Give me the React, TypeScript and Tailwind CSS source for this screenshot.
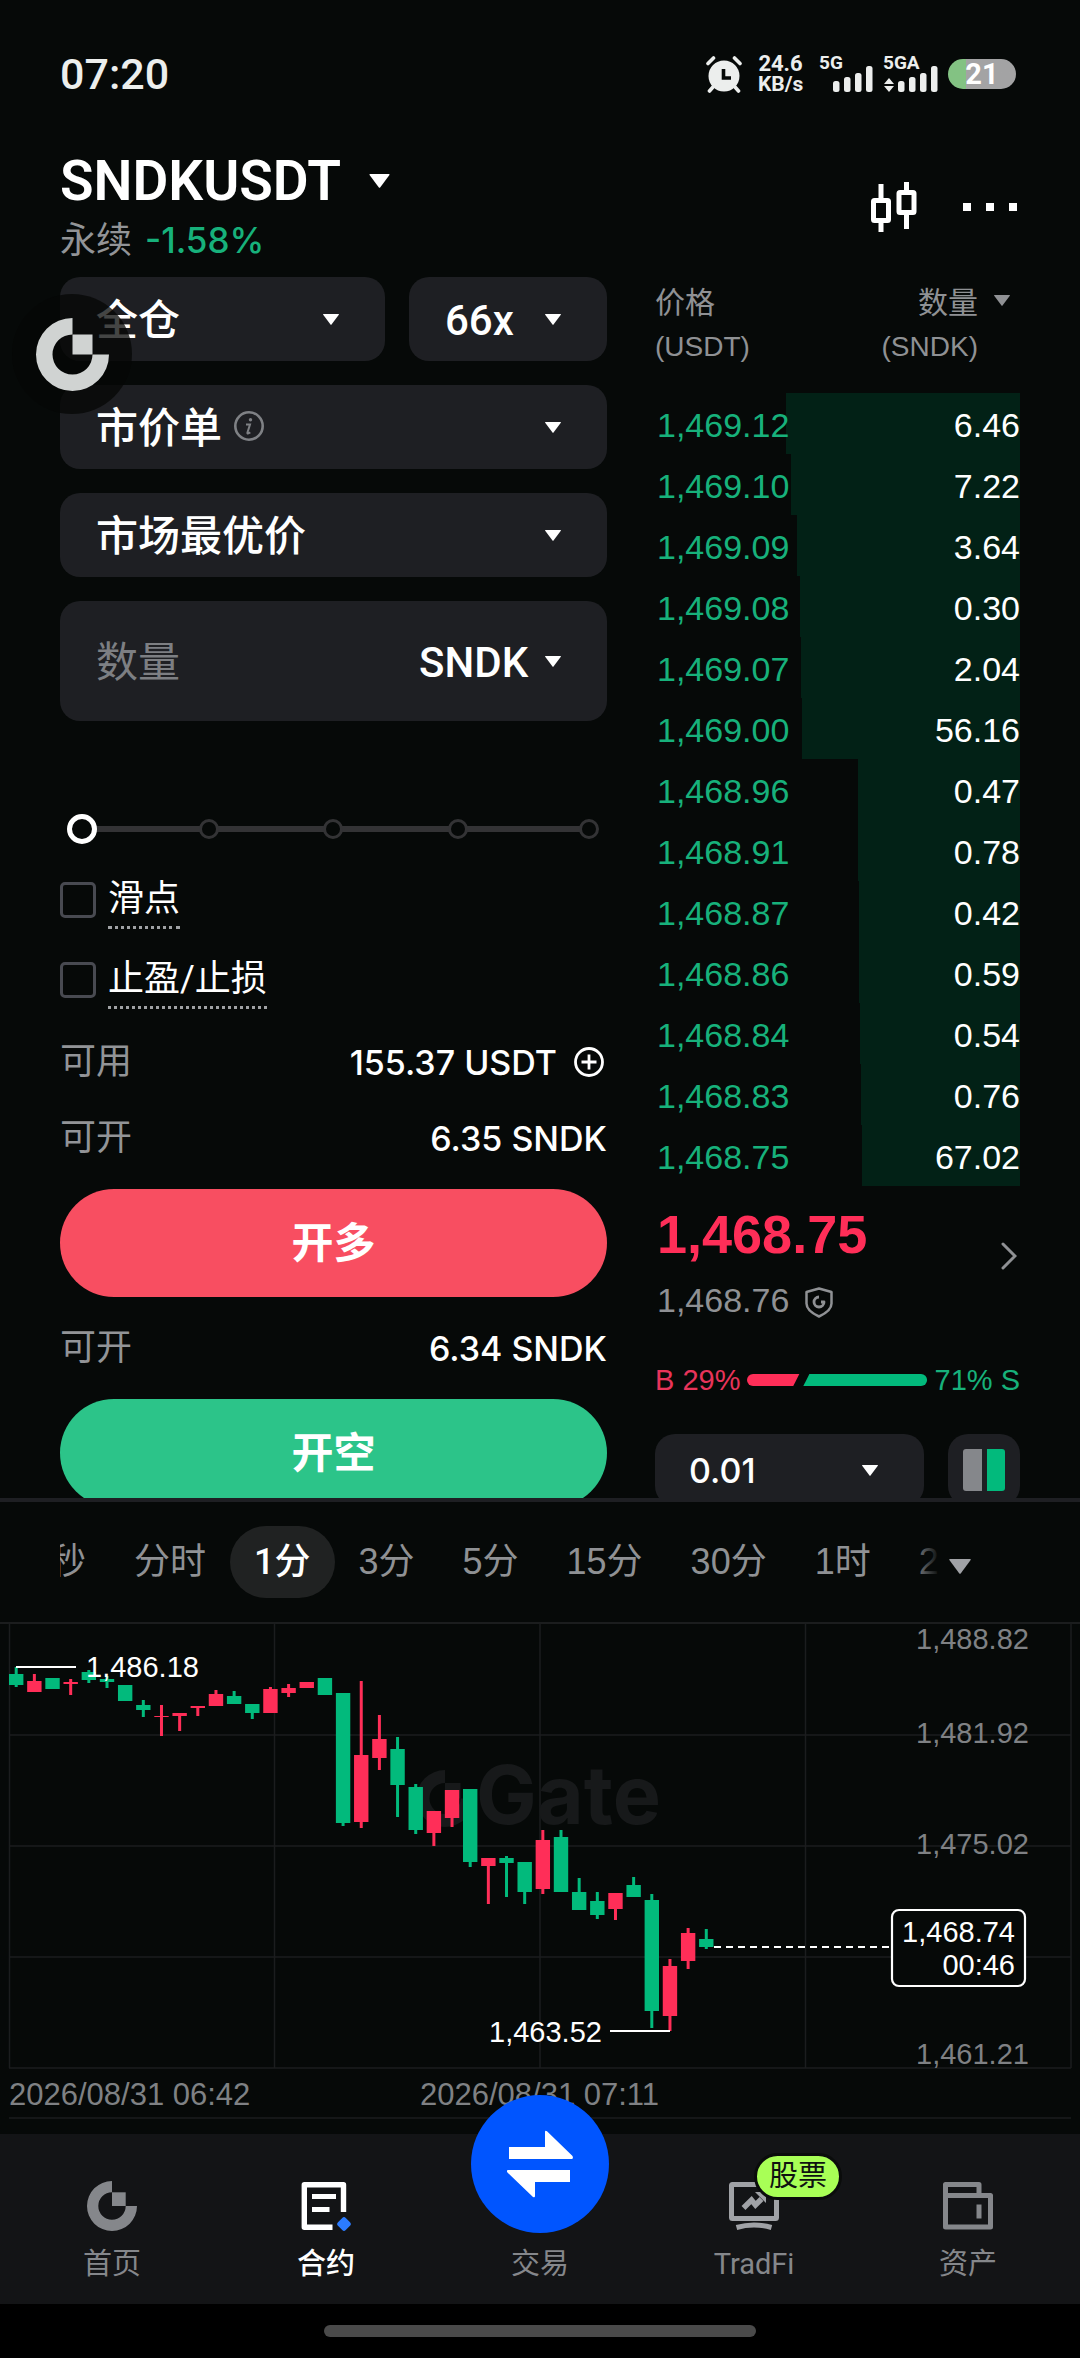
import { useState } from "react";

const NUM_FONT = "font-['Liberation_Sans','Noto_Sans_CJK_SC',sans-serif]";

type Candle = [kind: "up" | "down", high: number, top: number, bottom: number, low: number];

// Heights are in chart units, one unit per viewBox pixel.
const CANDLES: Candle[] = [
  ["down", 45, 52, 63, 65],
  ["up", 52, 59, 70, 70],
  ["down", 56, 56, 67, 67],
  ["up", 57, 60, 62, 73],
  ["down", 48, 50, 58, 61],
  ["down", 54, 57, 60, 66],
  ["down", 63, 63, 79, 79],
  ["down", 78, 83, 88, 95],
  ["up", 83, 94, 95, 114],
  ["up", 91, 91, 94, 109],
  ["up", 84, 84, 86, 94],
  ["up", 68, 72, 84, 84],
  ["down", 69, 74, 82, 82],
  ["down", 82, 82, 91, 97],
  ["up", 65, 67, 91, 91],
  ["up", 62, 66, 71, 75],
  ["up", 60, 60, 66, 66],
  ["down", 56, 56, 73, 73],
  ["down", 71, 71, 201, 204],
  ["up", 59, 133, 200, 206],
  ["up", 93, 117, 136, 148],
  ["down", 115, 127, 163, 195],
  ["down", 162, 165, 208, 212],
  ["up", 189, 189, 211, 224],
  ["up", 168, 168, 196, 205],
  ["down", 167, 167, 240, 245],
  ["up", 236, 236, 244, 282],
  ["down", 234, 236, 241, 275],
  ["down", 240, 240, 270, 282],
  ["up", 208, 218, 267, 272],
  ["down", 208, 215, 270, 270],
  ["down", 256, 270, 288, 288],
  ["down", 270, 279, 293, 297],
  ["up", 271, 271, 287, 298],
  ["down", 255, 263, 275, 275],
  ["down", 272, 278, 389, 406],
  ["up", 337, 344, 394, 409],
  ["up", 306, 311, 339, 347],
  ["down", 307, 317, 325, 327],
];

const BIDS = [
  { price: "1,469.12", amount: "6.46", depth: 64.1 },
  { price: "1,469.10", amount: "7.22", depth: 62.7 },
  { price: "1,469.09", amount: "3.64", depth: 61.1 },
  { price: "1,469.08", amount: "0.30", depth: 60.3 },
  { price: "1,469.07", amount: "2.04", depth: 60 },
  { price: "1,469.00", amount: "56.16", depth: 59.7 },
  { price: "1,468.96", amount: "0.47", depth: 44.4 },
  { price: "1,468.91", amount: "0.78", depth: 44.4 },
  { price: "1,468.87", amount: "0.42", depth: 44.1 },
  { price: "1,468.86", amount: "0.59", depth: 44.1 },
  { price: "1,468.84", amount: "0.54", depth: 43.8 },
  { price: "1,468.83", amount: "0.76", depth: 43.6 },
  { price: "1,468.75", amount: "67.02", depth: 43.3 },
];

const INTERVALS = ["秒", "分时", "1分", "3分", "5分", "15分", "30分", "1时", "2时"];

function Caret({ className = "" }: { className?: string }) {
  return (
    <svg viewBox="0 0 16 11" className={"shrink-0 " + className} fill="currentColor" aria-hidden="true">
      <path d="M.6 0h14.8q.9 0 .4.8L8.5 10.6q-.5.6-1 0L.2.8Q-.3 0 .6 0z" />
    </svg>
  );
}

function GateMark({ className = "" }: { className?: string }) {
  return (
    <svg viewBox="0 0 73 73" className={className} fill="currentColor" aria-hidden="true">
      <path d="M36.5 0A36.5 36.5 0 1 0 73 36.5H56.5A20 20 0 1 1 36.5 16.5z" />
      <path d="M36.5 16.5h20v20h-20z" />
    </svg>
  );
}

function SelectBox({ label, options, children }: { label: string; options: string[]; children?: React.ReactNode }) {
  return (
    <div className="relative h-[84px] w-full rounded-[20px] bg-[#1e1f23]">
      <select
        aria-label={label}
        className="h-full w-full appearance-none rounded-[20px] bg-transparent pt-[2px] pr-16 pl-9 text-[42px] font-medium text-white"
      >
        {options.map((o) => (
          <option key={o}>{o}</option>
        ))}
      </select>
      {children}
      <Caret className="pointer-events-none absolute top-[37px] right-[46px] h-[11px] w-4" />
    </div>
  );
}

function StatusBar() {
  return (
    <div className="flex h-[148px] items-center justify-between pr-16 pl-[60px] text-[#eceeed]">
      <span className="text-[43px] font-medium">07:20</span>
      <div className="flex items-center">
        <svg viewBox="0 0 36 37" className="h-[37px] w-9" aria-hidden="true">
          <circle cx="18" cy="20" r="15.5" fill="currentColor" />
          <g stroke="currentColor" strokeWidth="3.6" strokeLinecap="round">
            <path d="M2 7.5 7.5 2M34 7.5 28.5 2M7 31l-3.5 4M29 31l3.5 4" />
          </g>
          <path d="M17.5 13v9h7.5" fill="none" stroke="#060908" strokeWidth="3.6" />
        </svg>
        <div className="ml-4 w-[45px] text-center text-[22px] leading-5 font-bold">
          <div>24.6</div>
          <div className="text-[21px]">KB/s</div>
        </div>
        <div className="relative ml-4 h-9 w-[54px]">
          <span className="absolute top-0 left-0 text-[19px] leading-[14px] font-bold">5G</span>
          <svg viewBox="0 0 54 36" className="h-9 w-[54px]" fill="currentColor" aria-hidden="true">
            <rect x="14" y="25" width="6.5" height="11" rx="2.5" />
            <rect x="25" y="21" width="6.5" height="15" rx="2.5" />
            <rect x="36" y="17" width="6.5" height="19" rx="2.5" />
            <rect x="47" y="10" width="6.5" height="26" rx="2.5" />
          </svg>
        </div>
        <div className="relative ml-[10px] h-9 w-[55px]">
          <span className="absolute top-0 left-0 text-[19px] leading-[14px] font-bold">5GA</span>
          <svg viewBox="0 0 55 36" className="h-9 w-[55px]" fill="currentColor" aria-hidden="true">
            <path d="M6 22l5 6H1zM6 36l5-6H1z" />
            <rect x="15" y="25" width="6.5" height="11" rx="2.5" />
            <rect x="26" y="21" width="6.5" height="15" rx="2.5" />
            <rect x="37" y="17" width="6.5" height="19" rx="2.5" />
            <rect x="48" y="10" width="6.5" height="26" rx="2.5" />
          </svg>
        </div>
        <div className="ml-[10px] flex h-[30px] w-[68px] items-center justify-center rounded-full bg-linear-to-r from-[#83c283] from-27% to-[#a3a3a4] to-27% text-[29px] leading-[30px] font-bold text-white">
          21
        </div>
      </div>
    </div>
  );
}

function Header() {
  return (
    <header className="flex items-center justify-between px-[60px] pb-[11px]">
      <div>
        <button type="button" className="flex h-[66px] items-center gap-7 text-[55px] leading-[66px] font-semibold">
          SNDKUSDT
          <Caret className="h-[14px] w-[21px]" />
        </button>
        <p className="h-[52px] text-[36px] leading-[52px]">
          <span className="text-[#929497]">永续</span>{" "}
          <span className="ml-1 font-['Inter',sans-serif] text-[35px] font-medium text-[#17b17b]">-1.58%</span>
        </p>
      </div>
      <div className="flex items-center gap-[46px]">
        <button type="button" aria-label="K线">
          <svg viewBox="0 0 46 51" className="h-[51px] w-[46px]" fill="none" stroke="#fff" strokeWidth="5" aria-hidden="true">
            <rect x="2.5" y="18.5" width="15" height="20" rx="1" />
            <rect x="28" y="10.5" width="15" height="20" rx="1" />
            <path d="M10 2v16M10 39v11M35.5 0v10M35.5 31v16" />
          </svg>
        </button>
        <button type="button" aria-label="更多" className="flex gap-[15px] pr-[3px]">
          <span className="size-2 bg-white" />
          <span className="size-2 bg-white" />
          <span className="size-2 bg-white" />
        </button>
      </div>
    </header>
  );
}

function AmountSlider() {
  const [value, setValue] = useState(0);
  const stops = [27.2, 49.9, 72.8, 96.7];
  return (
    <div className="relative mt-[93px] flex h-[30px] items-center pr-3 pl-4">
      <div className="h-[6px] w-full bg-[#333335]" />
      {stops.map((s) => (
        <span
          key={s}
          className="absolute size-5 -translate-x-1/2 rounded-full border-[3px] border-[#333335] bg-[#060908]"
          style={{ left: `${s}%` }}
        />
      ))}
      <span
        className="absolute size-[30px] -translate-x-1/2 rounded-full border-[5px] border-white bg-[#060908]"
        style={{ left: `${4 + value * 0.927}%` }}
      />
      <input
        type="range"
        aria-label="数量比例"
        min={0}
        max={100}
        value={value}
        onChange={(e) => setValue(Number(e.target.value))}
        className="absolute inset-0 w-full opacity-0"
      />
    </div>
  );
}

function CheckRow({ label }: { label: string }) {
  return (
    <label className="flex h-20 items-center gap-3">
      <input type="checkbox" className="size-9 appearance-none rounded-[5px] border-[3px] border-[#484a51] checked:bg-white" />
      <span className="border-b-[3px] border-dotted border-[#a0a2a5] text-[36px] leading-[54px]">{label}</span>
    </label>
  );
}

function InfoRow({ label, value, children }: { label: string; value: string; children?: React.ReactNode }) {
  return (
    <div className="flex h-[76px] items-center">
      <span className="mr-auto text-[36px] text-[#929497]">{label}</span>
      <span className="font-['Inter',sans-serif] text-[34px] font-medium">{value}</span>
      {children}
    </div>
  );
}

function OrderForm() {
  return (
    <form className="relative" onSubmit={(e) => e.preventDefault()}>
      <div className="flex flex-col gap-6">
        <div className="grid grid-cols-[325fr_198fr] gap-6">
          <SelectBox label="保证金模式" options={["全仓", "逐仓"]} />
          <SelectBox label="杠杆" options={["66x"]} />
        </div>
        <SelectBox label="订单类型" options={["市价单", "限价单"]}>
          <button type="button" aria-label="说明" className="absolute top-[26px] left-[174px] text-[#7f8185]">
            <svg viewBox="0 0 30 30" className="size-[30px]" aria-hidden="true">
              <circle cx="15" cy="15" r="13.7" fill="none" stroke="currentColor" strokeWidth="2.6" />
              <circle cx="16.5" cy="8.8" r="1.7" fill="currentColor" />
              <path d="M12 13.5h4l-2.6 8.2q-.3 1.6 2.9-.3" fill="none" stroke="currentColor" strokeWidth="2" />
            </svg>
          </button>
        </SelectBox>
        <SelectBox label="价格类型" options={["市场最优价"]} />
        <div className="relative flex h-[120px] items-center rounded-[20px] bg-[#1e1f23]">
          <input
            type="text"
            aria-label="数量"
            placeholder="数量"
            className="w-0 min-w-0 grow bg-transparent pt-[2px] pl-9 text-[42px] text-white placeholder:text-[#7d7f83]"
          />
          <select aria-label="单位" className="h-full appearance-none bg-transparent pt-[2px] pr-[78px] text-[42px] font-medium text-white">
            <option>SNDK</option>
          </select>
          <Caret className="pointer-events-none absolute right-[46px] h-[11px] w-4" />
        </div>
      </div>

      <AmountSlider />

      <div className="mt-4 mb-1">
        <CheckRow label="滑点" />
        <CheckRow label="止盈/止损" />
      </div>

      <InfoRow label="可用" value="155.37 USDT">
        <button type="button" aria-label="充值" className="mr-[3px] ml-[17px]">
          <svg viewBox="0 0 30 30" className="size-[30px]" fill="none" stroke="#fff" strokeWidth="2.8" aria-hidden="true">
            <circle cx="15" cy="15" r="13.5" />
            <path d="M15 7.5v15M7.5 15h15" />
          </svg>
        </button>
      </InfoRow>
      <InfoRow label="可开" value="6.35 SNDK" />
      <button type="submit" className="my-[13px] h-[108px] w-full rounded-full bg-[#f84e61] text-[42px] font-bold">
        开多
      </button>
      <InfoRow label="可开" value="6.34 SNDK" />
      <button type="submit" className="mt-[13px] h-[108px] w-full rounded-full bg-[#2cc489] text-[42px] font-bold">
        开空
      </button>

      {/* Floating quick-access bubble, dragged over the form */}
      <div className="absolute top-[17px] -left-12 flex size-[120px] items-center justify-center rounded-full bg-[#060706]/75">
        <GateMark className="size-[73px] text-[#d0d3d2]" />
      </div>
    </form>
  );
}

function OrderBook() {
  return (
    <section className={NUM_FONT}>
      <table className="w-full border-collapse">
        <thead>
          <tr className="h-[116px] align-top text-[#8f9194]">
            <th className="px-0 pt-1 text-left text-[28px] leading-[44px] font-normal">
              <div className="text-[30px]">价格</div>
              (USDT)
            </th>
            <th className="px-0 pt-1 font-normal">
              <div className="flex justify-end gap-4 pr-[10px] text-right text-[28px] leading-[44px]">
                <div>
                  <div className="text-[30px]">数量</div>
                  (SNDK)
                </div>
                <Caret className="mt-[14px] h-[11px] w-4" />
              </div>
            </th>
          </tr>
        </thead>
        <tbody>
          {BIDS.map((b) => (
            <tr
              key={b.price}
              className="h-[61px] text-[34px] leading-[57px]"
              style={{
                backgroundImage: `linear-gradient(to left, #022116 ${b.depth}%, transparent ${b.depth}%)`,
              }}
            >
              <td className="pt-1 pr-0 pb-0 pl-[2px] text-[#17b17b]">{b.price}</td>
              <td className="px-0 pt-1 pb-0 text-right text-white">{b.amount}</td>
            </tr>
          ))}
        </tbody>
      </table>

      <a href="#trades" className="mt-1 flex items-center justify-between pr-[3px] pl-[2px]">
        <div>
          <div className="text-[54px] leading-[88px] font-bold text-[#ff2e58]">1,468.75</div>
          <div className="flex items-center gap-4 text-[34px] leading-[44px] text-[#8f9194]">
            1,468.76
            <svg viewBox="0 0 28 31" className="mt-1 h-[31px] w-7" fill="none" stroke="currentColor" strokeWidth="2.5" strokeLinejoin="round" aria-hidden="true">
              <path d="M14 1.5 26.5 5v11.5c0 6-6 10-12.5 13-6.5-3-12.5-7-12.5-13V5z" />
              <path d="M14 10a5 5 0 1 0 5 5h-3" strokeWidth="2.8" />
            </svg>
          </div>
        </div>
        <svg viewBox="0 0 16 28" className="h-7 w-4" fill="none" stroke="#8f9194" strokeWidth="3" strokeLinecap="round" aria-hidden="true">
          <path d="M2 2l12 12L2 26" />
        </svg>
      </a>

      <div className="mt-9 flex h-11 items-center gap-[7px] text-[29px] leading-[44px]">
        <span className="text-[#e8345a]">B 29%</span>
        <svg viewBox="0 0 179 12" preserveAspectRatio="none" className="h-3 min-w-0 grow" aria-hidden="true">
          <path d="M6 0h46l-6 12H6A6 6 0 0 1 6 0z" fill="#ff2e58" />
          <path d="M62 0h111a6 6 0 0 1 0 12H56z" fill="#02ba7c" />
        </svg>
        <span className="text-[#17b17b]">71% S</span>
      </div>

      <div className="mt-8 flex gap-6">
        <div className="relative h-[72px] grow rounded-[20px] bg-[#1e1f23]">
          <select
            aria-label="精度"
            className="h-full w-full appearance-none bg-transparent pr-16 pl-[34px] font-['Inter',sans-serif] text-[34px] font-medium text-white"
          >
            <option>0.01</option>
            <option>0.1</option>
          </select>
          <Caret className="pointer-events-none absolute top-[31px] right-[46px] h-[11px] w-4" />
        </div>
        <button type="button" aria-label="盘口样式" className="flex size-[72px] items-center justify-center gap-[5px] rounded-[20px] bg-[#1e1f23]">
          <span className="h-[42px] w-[19px] rounded-l-[3px] bg-[#85878b]" />
          <span className="h-[42px] w-[18px] rounded-r-[3px] bg-[#02ba7c]" />
        </button>
      </div>
    </section>
  );
}

function IntervalTabs() {
  const [active, setActive] = useState("1分");
  return (
    <div className="flex items-center px-[60px] py-6">
      <div className="relative w-0 max-w-[880px] grow overflow-hidden">
        <div className={"-ml-[34px] flex " + NUM_FONT}>
          {INTERVALS.map((label) => (
            <button
              key={label}
              type="button"
              onClick={() => setActive(label)}
              className={
                "h-[72px] shrink-0 rounded-full px-6 text-[36px] whitespace-nowrap " +
                (label === active ? "bg-[#202222] font-['Roboto','Noto_Sans_CJK_SC',sans-serif] font-medium text-white" : "text-[#8f9194]")
              }
            >
              {label}
            </button>
          ))}
        </div>
        <div className="pointer-events-none absolute inset-y-0 right-0 w-7 bg-linear-to-r from-transparent to-[#060908]" />
      </div>
      <button type="button" aria-label="更多周期" className="ml-[9px] pt-2 text-[#a0a2a6]">
        <Caret className="h-[15px] w-[22px]" />
      </button>
    </div>
  );
}

function Chart() {
  return (
    <svg viewBox="0 0 1080 512" className={"block w-full " + NUM_FONT} fontSize="29">
      <path d="M0 1h1080" stroke="#1b1d1e" strokeWidth="2" />
      <path
        d="M9.5 1v445M274.5 1v445M540 1v445M805.5 1v445M1071 1v445M9 113h1062M9 224h1062M9 335h1062M9 446h1062M9 496h1062"
        stroke="#1b1d1e"
        strokeWidth="1.5"
      />

      <g fill="#17191a">
        <path d="M445 148a28.5 28.5 0 1 0 28.5 28.5h-13A15.5 15.5 0 1 1 445 161z" />
        <path d="M445 161h15.5v15.5H445z" />
        <text x="476" y="202" fontSize="81" className="font-['Inter',sans-serif] font-bold">
          Gate
        </text>
      </g>

      {CANDLES.map(([kind, high, top, bottom, low], i) => {
        const x = 16.2 + i * 18.16;
        return (
          <g key={i} fill={kind === "up" ? "#ff2e58" : "#02ba7c"}>
            <rect x={x - 1.5} y={high} width="3" height={low - high} />
            <rect x={x - 7.2} y={top} width="14.4" height={bottom - top} />
          </g>
        );
      })}

      <g stroke="#fff" strokeWidth="2">
        <path d="M16 45h60M610 409h60" />
        <path d="M714 325h177" strokeDasharray="7 5" />
      </g>
      <g fill="#fff">
        <text x="86" y="55">1,486.18</text>
        <text x="489" y="420">1,463.52</text>
      </g>
      <g fill="#7f8184">
        <text x="916" y="27">1,488.82</text>
        <text x="916" y="121">1,481.92</text>
        <text x="916" y="232">1,475.02</text>
        <text x="916" y="442">1,461.21</text>
        <text x="9" y="483" fontSize="31">2026/08/31 06:42</text>
        <text x="420" y="483" fontSize="31">2026/08/31 07:11</text>
      </g>

      <rect x="892" y="288" width="133" height="76" rx="7" fill="#060908" stroke="#fff" strokeWidth="2.2" />
      <g fill="#fff" textAnchor="end">
        <text x="1015" y="320">1,468.74</text>
        <text x="1015" y="353">00:46</text>
      </g>
    </svg>
  );
}

function NavItem({ label, active, children }: { label: string; active?: boolean; children: React.ReactNode }) {
  return (
    <a
      href="#"
      aria-current={active ? "page" : undefined}
      className={
        "flex flex-1 flex-col items-center gap-[15px] pt-[47px] text-[29px] leading-9 " +
        (active ? "font-medium text-white" : "text-[#85878b]")
      }
    >
      {children}
      <span>{label}</span>
    </a>
  );
}

function BottomNav() {
  return (
    <nav className="relative z-20 flex h-[170px] bg-[#131416] px-[5px]">
      <NavItem label="首页">
        <GateMark className="size-[50px]" />
      </NavItem>
      <NavItem label="合约" active>
        <svg viewBox="0 0 50 50" className="size-[50px]" fill="none" aria-hidden="true">
          <path d="M42.5 31V3.7H3.3v42.6H31.5" stroke="#fff" strokeWidth="5.4" strokeLinejoin="round" />
          <path d="M11 15.5h24M11 28.5h17.5" stroke="#fff" strokeWidth="5" />
          <rect x="37.5" y="37.5" width="11" height="11" rx="2.5" transform="rotate(45 43 43)" fill="#2b7bff" />
        </svg>
      </NavItem>
      <NavItem label="交易">
        <span className="-mt-[86px] mb-[-2px] flex size-[138px] items-center justify-center rounded-full bg-[#0055ff]">
          <svg viewBox="0 0 66 68" className="h-[68px] w-[66px]" fill="#fff" aria-hidden="true">
            <path d="M2 17h36V2q0-2 2-.8L65.5 26q1.2 3-1 3H2zM63 40H1q-2 .5-.5 2.5L26 67q2 1 2-1V52h35z" />
          </svg>
        </span>
      </NavItem>
      <NavItem label="TradFi">
        <span className="relative">
          <svg viewBox="0 0 50 50" className="size-[50px]" fill="none" stroke="#a0a2a6" strokeWidth="5" aria-hidden="true">
            <rect x="2.5" y="3.5" width="45" height="34" rx="1" />
            <path d="M14.5 27l8-8 4 5 6-6" strokeWidth="5.5" />
            <path d="M26 11h11v11z" fill="#a0a2a6" stroke="none" />
            <path d="M7.5 46.5q17.5-5 35 0" />
          </svg>
          <span className="absolute top-[-28px] left-[25px] h-[47px] rounded-full border-[3px] border-[#0a0c0b] bg-[#a8ff56] px-3 text-[29px] leading-[40px] whitespace-nowrap text-[#0f1210]">
            股票
          </span>
        </span>
      </NavItem>
      <NavItem label="资产">
        <svg viewBox="0 0 50 50" className="size-[50px]" fill="none" stroke="currentColor" strokeWidth="5" strokeLinejoin="round" aria-hidden="true">
          <path d="M2.5 14.5h45v31.5h-45zM2.5 14.5v-11h33.5v11" />
          <path d="M36 23.5v14" />
        </svg>
      </NavItem>
    </nav>
  );
}

export default function App() {
  return (
    <div className="min-h-screen bg-black font-['Roboto','Noto_Sans_CJK_SC',sans-serif] text-white">
      <div className="bg-[#060908]">
        <StatusBar />
        <Header />
        <main className="grid grid-cols-[547fr_365fr] gap-12 px-[60px]">
          <OrderForm />
          <OrderBook />
        </main>
        {/* Chart sheet, docked over the end of the form */}
        <section className="relative z-10 -mt-[9px] border-t-4 border-[#1e1f23] bg-[#060908]">
          <IntervalTabs />
          <Chart />
        </section>
      </div>
      <BottomNav />
      <div className="flex h-[54px] justify-center pt-[21px]">
        <div className="h-3 w-2/5 rounded-full bg-[#4a4a4a]" />
      </div>
    </div>
  );
}
